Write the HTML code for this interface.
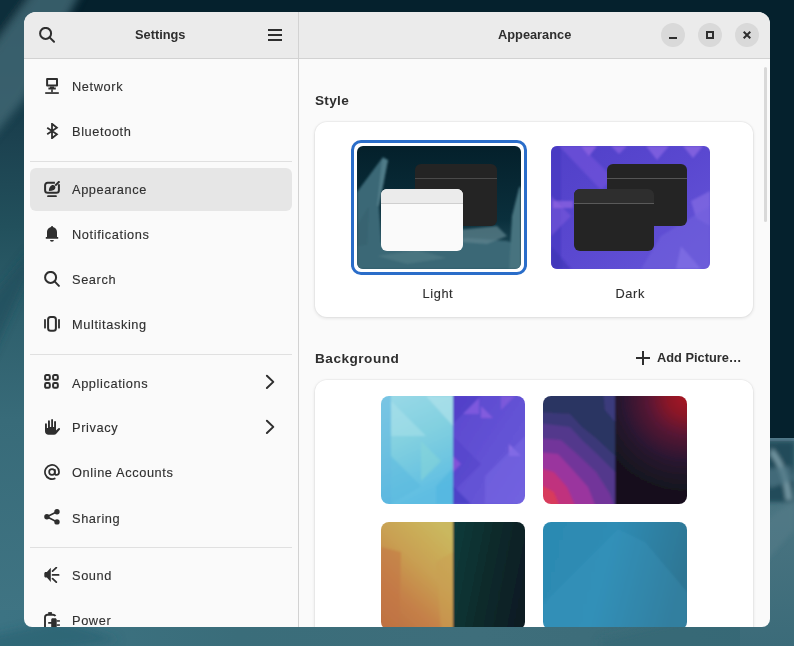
<!DOCTYPE html>
<html><head><meta charset="utf-8">
<style>
*{margin:0;padding:0;box-sizing:border-box}
html,body{width:794px;height:646px;overflow:hidden}
body{position:relative;font-family:"Liberation Sans",sans-serif;color:#2f2f2f;
background:#0a2733;}
.wp{position:absolute;left:0;top:0;width:794px;height:646px;overflow:hidden}
.win{will-change:transform;position:absolute;left:24px;top:12px;width:746px;height:615px;border-radius:12px 12px 8px 8px;overflow:hidden;background:#fafafa}
.abs{position:absolute}
.hdr{position:absolute;left:0;top:0;width:746px;height:47px;background:#ebebeb;border-bottom:1px solid #d2d2d2}
.vsep{position:absolute;left:274px;top:0;width:1px;height:615px;background:#d2d2d2}
.hsep{position:absolute;left:6px;width:262px;height:1px;background:#e0e0e0}
.title{position:absolute;font-weight:700;font-size:12.8px;white-space:nowrap;color:#2e2e2e}
.item{position:absolute;left:48px;font-size:12.8px;letter-spacing:.6px;-webkit-text-stroke:.12px #2f2f2f;white-space:nowrap;color:#2f2f2f;line-height:16px}
.ico{position:absolute;left:20px;width:16px;height:16px}
.sel{position:absolute;left:6px;top:156px;width:262px;height:43px;border-radius:6px;background:#e6e6e6}
.wbtn{position:absolute;top:11px;width:24px;height:24px;border-radius:12px;background:#d9d9d9}
.h2{position:absolute;font-weight:700;font-size:13.6px;letter-spacing:.3px;white-space:nowrap;color:#2e2e2e}
.card{position:absolute;background:#fff;border-radius:12px;box-shadow:0 0 0 1px rgba(0,0,0,.03),0 1px 3px 1px rgba(0,0,0,.07)}
.lbl{position:absolute;font-size:12.8px;letter-spacing:.6px;-webkit-text-stroke:.12px #2f2f2f;white-space:nowrap;color:#2f2f2f}
.thumb{position:absolute;border-radius:6px;overflow:hidden}
</style></head><body>
<svg class="wp" width="794" height="646" viewBox="0 0 794 646">
  <defs>
    <linearGradient id="wl" x1="0" y1="0" x2="0" y2="1"><stop offset="0" stop-color="#0a2e3c"/><stop offset=".22" stop-color="#1c4250"/><stop offset=".35" stop-color="#22505c"/><stop offset=".5" stop-color="#2f606d"/><stop offset=".65" stop-color="#386b79"/><stop offset=".95" stop-color="#3f7483"/><stop offset="1" stop-color="#2f6270"/></linearGradient>
    <linearGradient id="wr" x1="0" y1="0" x2="0" y2="1"><stop offset="0" stop-color="#3f6875"/><stop offset=".35" stop-color="#4a7481"/><stop offset="1" stop-color="#3b6b79"/></linearGradient>
    <linearGradient id="wb" x1="0" y1="0" x2="1" y2="0"><stop offset="0" stop-color="#3c7383"/><stop offset=".3" stop-color="#3a6d7a"/><stop offset=".6" stop-color="#3e6e7b"/><stop offset="1" stop-color="#3b6b78"/></linearGradient>
    <filter id="bl" x="-20%" y="-20%" width="140%" height="140%"><feGaussianBlur stdDeviation="4"/></filter><filter id="tb" x="-5%" y="-5%" width="110%" height="110%"><feGaussianBlur stdDeviation="1"/></filter><filter id="bl2" x="-20%" y="-20%" width="140%" height="140%"><feGaussianBlur stdDeviation="2"/></filter>
  </defs>
  <rect width="794" height="646" fill="#05212d"/>
  <rect x="0" y="0" width="40" height="646" fill="url(#wl)"/>
  <g filter="url(#bl)">
    <path d="M-10 -10H36L-10 55Z" fill="#0a2d3a"/>
    <path d="M35 -10H82L24 100L-10 140V50Z" fill="#3f6673" opacity=".85"/>
    <path d="M-10 300L30 250L30 270L-10 360Z" fill="#1f4d5a" opacity=".6"/>
  </g>
  <rect x="0" y="610" width="794" height="36" fill="url(#wb)"/>
  <g filter="url(#bl)">
    <path d="M-10 636L60 620L120 640L-10 660Z" fill="#2a6070" opacity=".6"/>
    <path d="M600 640L700 615L794 630V660H600Z" fill="#336674" opacity=".5"/>
  </g>
  <rect x="740" y="440" width="54" height="206" fill="url(#wr)"/>
  <rect x="740" y="438" width="54" height="3" fill="#55798a"/>
  <g filter="url(#bl2)">
    <rect x="740" y="442" width="54" height="60" fill="#244c5a"/>
    <path d="M770 455C778 462 784 480 786 500L792 500C790 478 782 458 772 448Z" fill="#7397a3"/>
    <path d="M760 470L790 466L794 480L770 488Z" fill="#507886" opacity=".7"/>
    <path d="M740 540L794 500V530L750 580Z" fill="#557d8a" opacity=".5"/>
  </g>
</svg>

<div class="win">
  <div class="hdr"></div>
  <div class="vsep"></div>
  <!-- header left -->
  <svg class="abs" style="left:15px;top:15px" width="16" height="16" viewBox="0 0 16 16"><circle cx="6.6" cy="6.4" r="5.5" fill="none" stroke="#2e2e2e" stroke-width="2"/><path d="M10.6 10.4L15 14.8" stroke="#2e2e2e" stroke-width="2" stroke-linecap="round"/></svg>
  <div class="title" style="left:111px;top:14.9px">Settings</div>
  <svg class="abs" style="left:244px;top:17px" width="14" height="12" viewBox="0 0 14 12"><path d="M0 1h14M0 6h14M0 11h14" stroke="#2e2e2e" stroke-width="2"/></svg>
  <!-- header right -->
  <div class="title" style="left:474px;top:15.2px">Appearance</div>
  <div class="wbtn" style="left:637px"></div>
  <div class="wbtn" style="left:674px"></div>
  <div class="wbtn" style="left:711px"></div>

  <svg class="abs" style="left:637px;top:11px" width="24" height="24"><rect x="8" y="14" width="8" height="2" fill="#2e2e2e"/></svg>
  <svg class="abs" style="left:674px;top:11px" width="24" height="24"><rect x="9" y="9" width="6" height="6" fill="none" stroke="#2e2e2e" stroke-width="2"/></svg>
  <svg class="abs" style="left:711px;top:11px" width="24" height="24"><path d="M8.7 8.8L15.3 15.3M15.3 8.8L8.7 15.3" stroke="#2e2e2e" stroke-width="2"/></svg>

  <!-- sidebar -->
  <div class="hsep" style="top:149px"></div>
  <div class="hsep" style="top:342px"></div>
  <div class="hsep" style="top:535px"></div>
  <div class="sel"></div>
  <svg class="ico" style="top:66px" viewBox="0 0 16 16"><path d="M3.1 1.1h9.9v6.4H3.1z" fill="none" stroke="#2e2e2e" stroke-width="2" stroke-linejoin="round"/><path d="M6 8.4h4v1.1h1.8v1.9H4.4V9.5H6z" fill="#2e2e2e"/><rect x="7.2" y="11.3" width="1.6" height="3" fill="#2e2e2e"/><rect x="1.2" y="14.2" width="13.6" height="1.7" fill="#2e2e2e"/></svg>
  <svg class="ico" style="top:111px" viewBox="0 0 16 16"><path d="M3.2 4.7L12.9 11.3 8 15.2V.8l4.9 3.9L3.2 11.3" fill="none" stroke="#2e2e2e" stroke-width="1.8" stroke-linejoin="miter"/></svg>
  <svg class="ico" style="top:169px" viewBox="0 0 16 16"><path d="M10.9 1.8H3.6A2.5 2.5 0 0 0 1.1 4.3v4.9a2.5 2.5 0 0 0 2.5 2.5h8.8a2.5 2.5 0 0 0 2.5-2.5V3.3" fill="none" stroke="#2e2e2e" stroke-width="2"/><path d="M11.2 4.6L15.5.3" stroke="#2e2e2e" stroke-width="2"/><path d="M4.9 9.9C4.9 6.6 6.7 4.1 9 4.1c1.4 0 2.4 1 2.4 2.4 0 2.3-2.2 3.4-6.5 3.4z" fill="#2e2e2e"/><path d="M3.5 14.2h9l.4 1.7H3.1z" fill="#2e2e2e"/></svg>
  <svg class="ico" style="top:214px" viewBox="0 0 16 16"><path d="M8 .1c-.6 0-1 .4-1 .9C4.7 1.5 3 3.5 3 6v5H1.8v1.7h12.4V11H13V6c0-2.5-1.7-4.5-4-5 0-.5-.4-.9-1-.9z" fill="#2e2e2e"/><path d="M6 14h3.9a1.95 1.7 0 0 1-3.9 0z" fill="#2e2e2e"/></svg>
  <svg class="ico" style="top:259px" viewBox="0 0 16 16"><circle cx="6.6" cy="6.4" r="5.5" fill="none" stroke="#2e2e2e" stroke-width="2"/><path d="M10.6 10.4L14.9 14.9" stroke="#2e2e2e" stroke-width="2" stroke-linecap="round"/></svg>
  <svg class="ico" style="top:304px" viewBox="0 0 16 16"><rect x="4.1" y="1.1" width="7.8" height="13.6" rx="2.5" fill="none" stroke="#2e2e2e" stroke-width="2"/><path d="M1 3.8v7.9M15 3.8v7.9" stroke="#2e2e2e" stroke-width="1.8" stroke-linecap="round"/></svg>
  <svg class="ico" style="top:362px" viewBox="0 0 16 16"><g fill="none" stroke="#2e2e2e" stroke-width="2"><rect x="1.1" y="1.1" width="4.7" height="4.7" rx="1.3"/><rect x="9.1" y="1.1" width="4.7" height="4.7" rx="1.3"/><rect x="1.1" y="9.1" width="4.7" height="4.7" rx="1.3"/><rect x="9.1" y="9.1" width="4.7" height="4.7" rx="1.3"/></g></svg>
  <svg class="ico" style="top:407px" viewBox="0 0 16 16"><path d="M1 5.2a.95.95 0 0 1 1.9 0V9H4V2.2a.95.95 0 0 1 1.9 0V8h1.3V1A.9.9 0 0 1 9 1v7h1.1V3A.95.95 0 0 1 12 3v8.5l2.4-2.2a1 1 0 0 1 1.5 1.3l-3.4 3.9c-.8.8-1.5 1.2-2.5 1.2H4.5C2.5 15.7 1 14.2 1 12.2z" fill="#2e2e2e"/></svg>
  <svg class="ico" style="top:452px" viewBox="0 0 16 16"><g fill="none" stroke="#2e2e2e" stroke-width="1.7"><path d="M15.05 8A7.05 7.05 0 1 0 11.4 14.2"/><circle cx="8" cy="8" r="2.85"/><path d="M10.85 5.3v3.9c0 1.1.75 1.7 1.75 1.7 1.4 0 2.45-1.2 2.45-2.9"/></g></svg>
  <svg class="ico" style="top:497px" viewBox="0 0 16 16"><circle cx="13" cy="2.8" r="2.7" fill="#2e2e2e"/><circle cx="2.9" cy="7.8" r="2.7" fill="#2e2e2e"/><circle cx="13" cy="12.9" r="2.7" fill="#2e2e2e"/><path d="M13 2.8L2.9 7.8 13 12.9" fill="none" stroke="#2e2e2e" stroke-width="1.7"/></svg>
  <svg class="ico" style="top:555px" viewBox="0 0 16 16"><path d="M.3 6.4c0-.8.6-1.5 1.4-1.5h1.2L6.8.8v14.2L2.9 10.5H1.7C.9 10.5.3 9.8.3 9z" fill="#2e2e2e"/><path d="M8.6 4.1L12.3.7M8.6 7.9h6M8.6 11.7l3.7 3.4" stroke="#2e2e2e" stroke-width="1.8" stroke-linecap="round"/></svg>
  <svg class="ico" style="top:599px" viewBox="0 0 16 16"><rect x="4.2" y="1.1" width="3.7" height="1.9" fill="#2e2e2e"/><path d="M1 16V6.3C1 4.8 2 3.8 3.5 3.8h5.5c1.2 0 2 .5 2.5 1.2" fill="none" stroke="#2e2e2e" stroke-width="1.9"/><path d="M8.6 7.2h2.6c.8 0 1.5.7 1.5 1.5v7.3H7.2V12.8H4.2v-1.7h3V8.7c0-.8.6-1.5 1.4-1.5z" fill="#2e2e2e"/><rect x="12.6" y="9.2" width="3.3" height="1.5" fill="#2e2e2e"/><rect x="12.6" y="13.3" width="3.3" height="1.5" fill="#2e2e2e"/></svg>
  <div class="item" style="top:67.2px">Network</div>
  <div class="item" style="top:112.1px">Bluetooth</div>
  <div class="item" style="top:170.3px">Appearance</div>
  <div class="item" style="top:215.1px">Notifications</div>
  <div class="item" style="top:260.0px">Search</div>
  <div class="item" style="top:304.8px">Multitasking</div>
  <div class="item" style="top:363.5px">Applications</div>
  <div class="item" style="top:408.3px">Privacy</div>
  <div class="item" style="top:453.4px">Online Accounts</div>
  <div class="item" style="top:498.6px">Sharing</div>
  <div class="item" style="top:555.8px">Sound</div>
  <div class="item" style="top:600.6px">Power</div>

  <svg class="abs" style="left:240px;top:360px" width="14" height="20"><path d="M2.9 3.8L9.3 9.9 2.9 16" fill="none" stroke="#2e2e2e" stroke-width="2" stroke-linecap="round" stroke-linejoin="round"/></svg>
  <svg class="abs" style="left:240px;top:405px" width="14" height="20"><path d="M2.9 3.8L9.3 9.9 2.9 16" fill="none" stroke="#2e2e2e" stroke-width="2" stroke-linecap="round" stroke-linejoin="round"/></svg>
  <!-- content -->
  <div class="h2" style="left:291px;top:81.1px">Style</div>
  <div class="card" style="left:291px;top:110px;width:438px;height:195px"></div>
  <div class="h2" style="left:291px;top:339px;letter-spacing:.5px">Background</div>
  <div class="title" style="left:633px;top:338px">Add Picture…</div>
  <div class="card" style="left:291px;top:368px;width:438px;height:300px"></div>
  <div class="abs" style="left:740px;top:55px;width:3px;height:155px;border-radius:2px;background:#d9d9d9"></div>
  <svg class="abs" style="left:612px;top:339px" width="14" height="14"><path d="M7 0v14M0 7h14" stroke="#2e2e2e" stroke-width="2"/></svg>
  <!-- light ring -->
  <div class="abs" style="left:327px;top:128px;width:176px;height:135px;border:3px solid #2a6dc9;border-radius:10px"></div>
  <svg class="thumb" style="left:333px;top:134px" width="164" height="123" viewBox="0 0 164 123">
    <defs>
      <linearGradient id="lpbg" x1="0" y1="0" x2="0" y2="1"><stop offset="0" stop-color="#04202b"/><stop offset=".6" stop-color="#0a2f3c"/><stop offset="1" stop-color="#2a5664"/></linearGradient><filter id="lpblur"><feGaussianBlur stdDeviation="1"/></filter>
      <linearGradient id="lpb" x1="0" y1="0" x2="0" y2="1"><stop offset="0" stop-color="#4d7b88"/><stop offset="1" stop-color="#3d6d7b"/></linearGradient>
    </defs>
    <rect width="164" height="123" fill="url(#lpbg)"/>
    <g filter="url(#lpblur)">
    <path d="M0 46L26 11L31 14L22 60L26 123H0Z" fill="#3b6876"/>
    <path d="M25 13L31 14L22 60L20 60Z" fill="#5a8590" opacity=".7"/>
    <path d="M0 80L12 60L10 100L0 110Z" fill="#335f6c" opacity=".5"/>
    <path d="M0 100L30 96L70 100L110 92L150 95L164 100V123H0Z" fill="#3a6876"/>
    <path d="M100 84L140 80L150 90L130 98L105 96Z" fill="#5f858f" opacity=".7"/>
    <path d="M152 123L155 70L162 42L164 40V123Z" fill="#46737f"/>
    <path d="M20 110L60 104L90 112L50 118Z" fill="#5a808a" opacity=".5"/>
    </g>
    <g>
      <rect x="58" y="18" width="82" height="62" rx="6" fill="#242424"/>
      <rect x="58" y="32" width="82" height="1" fill="#4a4a4a"/>
    </g>
    <g>
      <rect x="24" y="43" width="82" height="62" rx="6" fill="#fafafa"/>
      <path d="M24 57V49a6 6 0 0 1 6-6h70a6 6 0 0 1 6 6v8z" fill="#ebebeb"/>
      <rect x="24" y="57" width="82" height="1" fill="#cfcfcf"/>
    </g>
  </svg>
  <!-- dark -->
  <svg class="thumb" style="left:527px;top:134px" width="159" height="123" viewBox="0 0 159 123">
    <defs>
      <linearGradient id="dpbg" x1="0" y1="0" x2="1" y2="1"><stop offset="0" stop-color="#5040c8"/><stop offset=".5" stop-color="#5a48d0"/><stop offset="1" stop-color="#6656d8"/></linearGradient>
    </defs>
    <rect width="159" height="123" fill="url(#dpbg)"/>
    <g filter="url(#lpblur)">
    <rect width="10" height="123" fill="#4636c0" opacity=".7"/>
    <path d="M8 0H30L62 32L50 44Z" fill="#7052da" opacity=".7"/>
    <path d="M30 0H46L38 10Z" fill="#9064e4" opacity=".8"/>
    <path d="M60 0H76L68 8Z" fill="#8a62e2" opacity=".7"/>
    <path d="M95 0H118L106 14Z" fill="#8a66e4" opacity=".7"/>
    <path d="M132 0H152L142 12Z" fill="#9a70e8" opacity=".6"/>
    <path d="M0 50L20 70L0 90Z" fill="#7a58dc" opacity=".6"/>
    <path d="M2 55H22V62H2Z" fill="#9a6ae6" opacity=".6"/>
    <path d="M140 55L159 45V80L145 72Z" fill="#8a70e6" opacity=".6"/>
    <path d="M110 90L159 60V123H90Z" fill="#7060dc" opacity=".6"/>
    <path d="M0 100L20 123H0Z" fill="#3e34b4" opacity=".6"/>
    <path d="M130 100L150 123H125Z" fill="#8c78ea" opacity=".5"/>
    </g>
    <g>
      <rect x="56" y="18" width="80" height="62" rx="6" fill="#242424"/>
      <rect x="56" y="32" width="80" height="1" fill="#555"/>
    </g>
    <g>
      <rect x="23" y="43" width="80" height="62" rx="6" fill="#242424"/>
      <path d="M23 57V49a6 6 0 0 1 6-6h68a6 6 0 0 1 6 6v8z" fill="#2e2e2e"/>
      <rect x="23" y="57" width="80" height="1" fill="#5a5a5a"/>
    </g>
  </svg>
  <div class="lbl" style="left:398.5px;top:273.8px">Light</div>
  <div class="lbl" style="left:591.5px;top:273.8px">Dark</div>
  <!-- backgrounds -->
  <svg class="thumb" style="left:357px;top:384px;border-radius:8px" width="144" height="108" viewBox="0 0 144 108">
    <defs>
      <linearGradient id="t1a" x1="0" y1="0" x2=".3" y2="1"><stop offset="0" stop-color="#9edbe8"/><stop offset=".5" stop-color="#82d0e0"/><stop offset="1" stop-color="#5ebde2"/></linearGradient>
      <linearGradient id="t1b" x1="0" y1="0" x2="1" y2="1"><stop offset="0" stop-color="#5a48ce"/><stop offset=".6" stop-color="#6554d6"/><stop offset="1" stop-color="#6e60de"/></linearGradient>
    </defs>
    <g filter="url(#tb)">
    <rect x="-6" y="-6" width="78" height="120" fill="url(#t1a)"/>
    <rect x="-6" y="-6" width="16" height="120" fill="#52ace0" opacity=".45"/>
    <path d="M10 5L45 40L10 40Z" fill="#b2e4ea" opacity=".45"/>
    <path d="M45 0H72V30Z" fill="#bde8ee" opacity=".5"/>
    <path d="M10 60L40 90L10 108Z" fill="#58b8e0" opacity=".5"/>
    <path d="M40 45L60 65L40 85Z" fill="#8ad8d8" opacity=".5"/>
    <path d="M55 90L72 72V108H55Z" fill="#4eb4e0" opacity=".5"/>
    <rect x="72" y="-6" width="78" height="120" fill="url(#t1b)"/>
    <path d="M72 0H100L72 28Z" fill="#4c3cc4" opacity=".6"/>
    <path d="M82 18L98 2L98 18Z" fill="#8a5ee2" opacity=".7"/>
    <path d="M100 10L112 22H100Z" fill="#9a66e6" opacity=".6"/>
    <path d="M120 0H134L120 14Z" fill="#8c60e0" opacity=".6"/>
    <path d="M72 40L100 68L72 96Z" fill="#5240c8" opacity=".5"/>
    <path d="M128 48L140 60H128Z" fill="#9a78ec" opacity=".7"/>
    <path d="M104 80L144 40V108H104Z" fill="#7868e4" opacity=".5"/>
    <path d="M72 60L80 68L72 76Z" fill="#9e5ae0" opacity=".6"/>
    <path d="M72 90L90 108H72Z" fill="#4038c0" opacity=".6"/>
      </g>
  </svg>
  <svg class="thumb" style="left:519px;top:384px;border-radius:8px" width="144" height="108" viewBox="0 0 144 108">
    <defs>
      <radialGradient id="t2r" cx="144" cy="0" r="100" gradientUnits="userSpaceOnUse"><stop offset="0" stop-color="#a81a22"/><stop offset=".2" stop-color="#8a1628"/><stop offset=".4" stop-color="#561634"/><stop offset=".65" stop-color="#2a1430"/><stop offset=".85" stop-color="#1b1324"/><stop offset="1" stop-color="#15111c"/></radialGradient>
    </defs>
    <g filter="url(#tb)">
    <rect x="-6" y="-6" width="78" height="120" fill="#2c3462"/>
    <path d="M60 -6H72V26L62 14Z" fill="#3a3a7c"/>
    <path d="M-6 16L27 18L39 31L54 43L72 60V114H-6Z" fill="#3b3878"/>
    <path d="M-6 27L27 31L40 45L54 58L72 76V114H-6Z" fill="#53388c"/>
    <path d="M-6 42L18 44L34 58L53 76L67 98L72 114H-6Z" fill="#72369a"/>
    <path d="M-6 56L15 58L29 73L45 91L54 114H-6Z" fill="#9a349e"/>
    <path d="M-6 71L11 76L24 91L34 114H-6Z" fill="#c0307e"/>
    <path d="M-6 87L11 96L18 114H-6Z" fill="#d83a5c"/>
    <rect x="72" y="-6" width="78" height="120" fill="url(#t2r)"/>
    </g>
  </svg>
  <svg class="thumb" style="left:357px;top:510px;border-radius:8px" width="144" height="108" viewBox="0 0 144 108">
    <defs>
      <linearGradient id="t3a" x1=".7" y1="0" x2=".1" y2="1"><stop offset="0" stop-color="#cab85e"/><stop offset=".35" stop-color="#c9a052"/><stop offset=".65" stop-color="#c58048"/><stop offset="1" stop-color="#b86c40"/></linearGradient>
      <linearGradient id="t3b" x1="0" y1="0" x2="1" y2=".3"><stop offset="0" stop-color="#0f3c3c"/><stop offset=".5" stop-color="#0d2c2c"/><stop offset="1" stop-color="#0b1c24"/></linearGradient>
    </defs>
    <g filter="url(#tb)">
    <rect x="-6" y="-6" width="78" height="120" fill="url(#t3a)"/>
    <path d="M0 25L20 30L18 108H0Z" fill="#c47444" opacity=".5"/>
    <path d="M55 40L72 30V108H60Z" fill="#c9a052" opacity=".5"/>
    <rect x="72" y="-6" width="78" height="120" fill="url(#t3b)"/>
      </g>
  </svg>
  <svg class="thumb" style="left:519px;top:510px;border-radius:8px" width="144" height="108" viewBox="0 0 144 108">
    <defs>
      <linearGradient id="t4" x1="0" y1="0" x2="1" y2=".2"><stop offset="0" stop-color="#2c8ab2"/><stop offset=".5" stop-color="#2e8cb4"/><stop offset="1" stop-color="#2e7694"/></linearGradient>
    </defs>
    <g filter="url(#tb)">
    <rect x="-6" y="-6" width="156" height="120" fill="url(#t4)"/>
    <path d="M0 82L75 7L102 20L144 70V108H0Z" fill="#3aa0c8" opacity=".22"/>
      </g>
  </svg>
</div>
</body></html>
